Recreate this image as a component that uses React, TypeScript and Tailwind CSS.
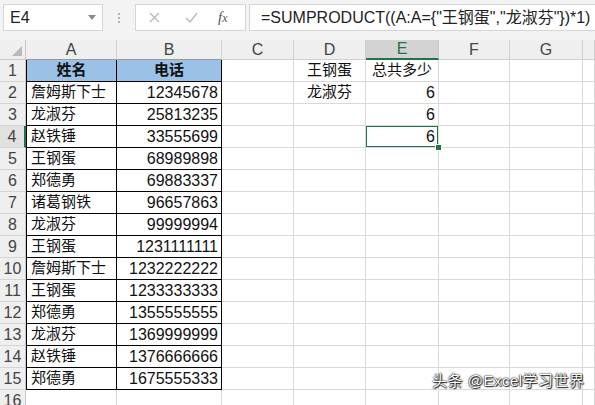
import React from 'react';

const font = { fontFamily: '"Liberation Sans", "Noto Sans CJK SC", sans-serif' };
const cols = 'grid grid-cols-[26px_91px_105px_72px_72px_73px_71px_73px_12px]';
const formula = '=SUMPRODUCT((A:A={"王钢蛋","龙淑芬"})*1)';

const people: [string, string][] = [
  ['詹姆斯下士', '12345678'],
  ['龙淑芬', '25813235'],
  ['赵铁锤', '33555699'],
  ['王钢蛋', '68989898'],
  ['郑德勇', '69883337'],
  ['诸葛钢铁', '96657863'],
  ['龙淑芬', '99999994'],
  ['王钢蛋', '1231111111'],
  ['詹姆斯下士', '1232222222'],
  ['王钢蛋', '1233333333'],
  ['郑德勇', '1355555555'],
  ['龙淑芬', '1369999999'],
  ['赵铁锤', '1376666666'],
  ['郑德勇', '1675555333'],
];

const side: Record<number, { d?: string; e?: string }> = {
  1: { d: '王钢蛋', e: '总共多少' },
  2: { d: '龙淑芬', e: '6' },
  3: { e: '6' },
  4: { e: '6' },
};

const cell = 'h-[22px] border-r border-b whitespace-nowrap overflow-hidden text-[#111]';
const grid = 'border-[#d9d9d9]';

function FormulaBar() {
  return (
    <div className="h-[40px] bg-[#f3f3f3] flex items-start pt-[4px]">
      <div className="ml-[3px] w-[100px] h-[27px] bg-white border border-[#d6d6d6] flex items-center justify-between pl-[6px] pr-[6px]">
        <span className="text-[16px] text-[#222]">E4</span>
        <svg width="8" height="5" viewBox="0 0 8 5">
          <path d="M0 0h8L4 5z" fill="#8a8a8a" />
        </svg>
      </div>
      <div className="w-[32px] h-[27px] flex flex-col items-center justify-center gap-[2px]">
        <span className="w-[2px] h-[2px] bg-[#b4b4b4]" />
        <span className="w-[2px] h-[2px] bg-[#b4b4b4]" />
        <span className="w-[2px] h-[2px] bg-[#b4b4b4]" />
      </div>
      <div className="w-[111px] h-[27px] bg-white border border-[#d6d6d6] flex items-center">
        <svg className="ml-[13px]" width="11" height="11" viewBox="0 0 11 11">
          <path d="M1 1l9 9M10 1l-9 9" stroke="#b8b8b8" strokeWidth="1.3" />
        </svg>
        <svg className="ml-[25px]" width="13" height="11" viewBox="0 0 13 11">
          <path d="M1 6l4 4 7-9" stroke="#b8b8b8" strokeWidth="1.3" fill="none" />
        </svg>
        <span className="ml-[20px] italic text-[#555] text-[15px]" style={{ fontFamily: '"Liberation Serif", serif' }}>
          f<span className="text-[12px]">x</span>
        </span>
      </div>
      <div className="ml-[3px] flex-1 h-[27px] bg-white border border-r-0 border-[#d6d6d6] flex items-center pl-[11px]">
        <span className="text-[16px] text-[#222] whitespace-nowrap">{formula}</span>
      </div>
    </div>
  );
}

function HeaderRow() {
  const letters = ['A', 'B', 'C', 'D', 'E', 'F', 'G', ''];
  return (
    <div className={cols + ' h-[20px] bg-[#efefef] text-[#444] text-[16px]'}>
      <div className="border-r border-b border-[#c8c8c8] flex items-end justify-end pr-[3px] pb-[3px]">
        <svg width="10" height="10" viewBox="0 0 10 10">
          <path d="M10 0V10H0z" fill="#b9b9b9" />
        </svg>
      </div>
      {letters.map((l, i) =>
        l === 'E' ? (
          <div key={i} className="bg-[#d3d3d3] border-r border-[#c8c8c8] border-b-2 border-b-[#217346] text-[#217346] flex items-center justify-center leading-none">
            E
          </div>
        ) : (
          <div key={i} className={'border-r border-b border-[#d0d0d0] flex items-center justify-center leading-none ' + (i < 2 ? 'border-b-[#9a9a9a]' : '')}>
            {l}
          </div>
        )
      )}
    </div>
  );
}

function Row({ n }: { n: number }) {
  const p = n === 1 ? null : people[n - 2];
  const inTable = n <= 15;
  const s = side[n] || {};
  const sel = n === 4;
  const tb = inTable ? 'border-black' : grid;
  return (
    <div className={cols}>
      <div
        className={
          'h-[22px] border-b border-[#d4d4d4] flex items-center justify-center text-[16px] text-[#444] ' +
          (sel ? 'bg-[#e1e1e1] border-r-2 border-r-[#217346]' : 'bg-[#efefef] border-r border-r-[#c8c8c8]')
        }
      >
        {n}
      </div>
      {n === 1 ? (
        <>
          <div className={cell + ' border-l border-black bg-[#9bc2e6] text-[15px] font-bold flex items-center justify-center'}>姓名</div>
          <div className={cell + ' border-black bg-[#9bc2e6] text-[15px] font-bold flex items-center justify-center'}>电话</div>
        </>
      ) : (
        <>
          <div className={cell + ' text-[15px] flex items-center pl-[4px] ' + (inTable ? 'border-l border-black' : grid)}>{p?.[0]}</div>
          <div className={cell + ' ' + tb + ' text-[16px] flex items-center justify-end pr-[3px]'}>{p?.[1]}</div>
        </>
      )}
      <div className={cell + ' ' + grid} />
      <div className={cell + ' ' + grid + ' text-[15px] flex items-center justify-center'}>{s.d}</div>
      <div className={cell + ' ' + grid + ' relative flex items-center ' + (n === 1 ? 'text-[15px] pl-[6px]' : 'text-[16px] justify-end pr-[3px]')}>
        {s.e}
        {sel && <div className="absolute left-[-1px] top-[-1px] right-[-1px] bottom-[-1px] border-2 border-[#217346]" />}
      </div>
      <div className={cell + ' ' + grid + ' ' + (sel ? 'relative overflow-visible' : '')}>
        {sel && <div className="absolute left-[-4px] top-[18px] w-[7px] h-[7px] bg-[#217346] border border-white z-10" />}
      </div>
      <div className={cell + ' ' + grid} />
      <div className={cell + ' ' + grid} />
    </div>
  );
}

export default function App() {
  const rows = Array.from({ length: 16 }, (_, i) => i + 1);
  return (
    <div className="w-[595px] h-[405px] overflow-hidden bg-white relative" style={font}>
      <FormulaBar />
      <HeaderRow />
      {rows.map((n) => (
        <Row key={n} n={n} />
      ))}
      <div className="absolute left-[432px] top-[370px] text-[15px] text-white tracking-[0.5px] [text-shadow:0_0_1px_#000,0_0_2px_#000,1px_1px_1px_#333]">
        头条 @Excel学习世界
      </div>
    </div>
  );
}
